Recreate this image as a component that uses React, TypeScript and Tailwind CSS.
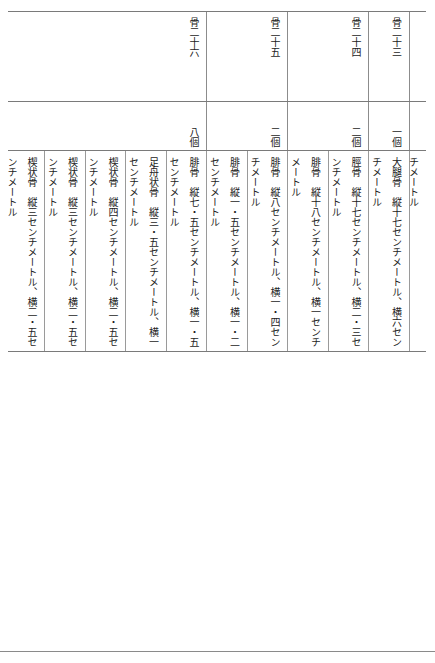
type Group = {
  header: string;
  count: string;
  width: string;
};

type Cell = {
  lines: string[];
  width: string;
};

// right-to-left reading order is reversed here: the arrays run left to right on screen
const groups: Group[] = [
  { header: "骨二十六", count: "八個", width: "w-[199px]" },
  { header: "骨二十五", count: "二個", width: "w-[81px]" },
  { header: "骨二十四", count: "二個", width: "w-[81px]" },
  { header: "骨二十三", count: "一個", width: "w-[40.5px]" },
  { header: "", count: "", width: "w-[16px]" },
];

const cells: Cell[] = [
  { lines: ["楔状骨　縦三センチメートル、横二・五セ", "ンチメートル"], width: "w-[37px]" },
  { lines: ["楔状骨　縦三センチメートル、横二・五セ", "ンチメートル"], width: "w-[40.5px]" },
  { lines: ["楔状骨　縦四センチメートル、横二・五セ", "ンチメートル"], width: "w-[40.5px]" },
  { lines: ["足舟状骨　縦三・五センチメートル、横一", "センチメートル"], width: "w-[40.5px]" },
  { lines: ["腓骨　縦七・五センチメートル、横一・五", "センチメートル"], width: "w-[40.5px]" },
  { lines: ["腓骨　縦一・五センチメートル、横一・二", "センチメートル"], width: "w-[40.5px]" },
  { lines: ["腓骨　縦八センチメートル、横一・四セン", "チメートル"], width: "w-[40.5px]" },
  { lines: ["腓骨　縦十八センチメートル、横一センチ", "メートル"], width: "w-[40.5px]" },
  { lines: ["脛骨　縦十七センチメートル、横二・三セ", "ンチメートル"], width: "w-[40.5px]" },
  { lines: ["大腿骨　縦十七センチメートル、横六セン", "チメートル"], width: "w-[40.5px]" },
  { lines: ["チメートル"], width: "w-[16px]" },
];

const vertical = "[writing-mode:vertical-rl] whitespace-nowrap text-[10px] leading-[20px]";

export default function App() {
  return (
    <div className="w-[435px] h-[663px] bg-white text-[#1c1c1c] font-['Noto_Sans_CJK_JP','Noto_Sans_CJK_SC',sans-serif] flex flex-col">
      <div className="ml-[8px] mt-[11px] w-[417.5px] border-t border-[#7a7a7a]">
        {/* 骨番号 */}
        <div className="flex h-[90px] border-b border-[#7a7a7a]">
          {groups.map((g, i) => (
            <div
              key={i}
              className={`${g.width} flex-none flex justify-end ${i < groups.length - 1 ? "border-r border-[#8c8c8c]" : ""}`}
            >
              <div className={`${vertical} pt-[5px] pr-[2px]`}>{g.header}</div>
            </div>
          ))}
        </div>

        {/* 個数 */}
        <div className="flex h-[49px] border-b border-[#7a7a7a]">
          {groups.map((g, i) => (
            <div
              key={i}
              className={`${g.width} flex-none flex justify-end ${i < groups.length - 1 ? "border-r border-[#8c8c8c]" : ""}`}
            >
              <div className={`${vertical} h-full text-end pb-[3px] pr-[2px]`}>{g.count}</div>
            </div>
          ))}
        </div>

        {/* 寸法 */}
        <div className="flex h-[201px] border-b border-[#7a7a7a]">
          {cells.map((c, i) => (
            <div
              key={i}
              className={`${c.width} flex-none flex justify-end ${i < cells.length - 1 ? "border-r border-[#9a9a9a]" : ""}`}
            >
              <div className={`${vertical} pt-[6px] pr-[2px]`}>
                {c.lines.map((l, j) => (
                  <div key={j}>{l}</div>
                ))}
              </div>
            </div>
          ))}
        </div>
      </div>

      <div className="flex-1" />
      <div className="h-px bg-[#8a8a8a] mb-[11px]" />
    </div>
  );
}
